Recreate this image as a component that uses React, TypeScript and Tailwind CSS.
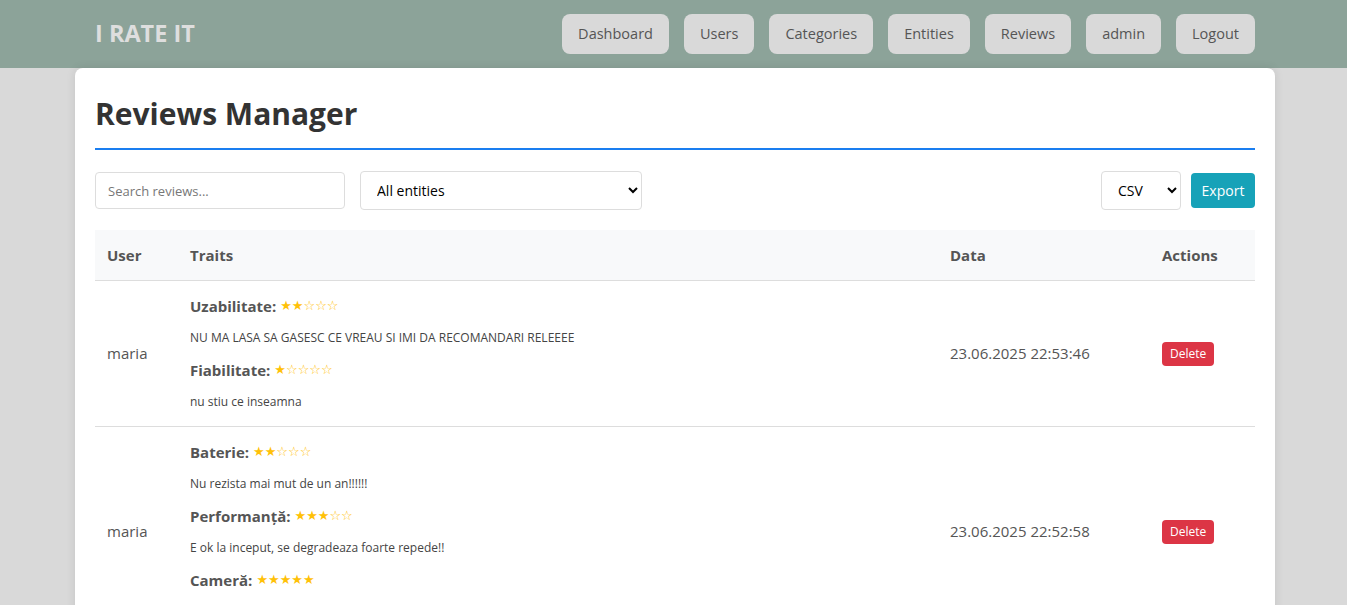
const font = { fontFamily: '"Open Sans", "Noto Sans", sans-serif' };

const navItems = ['Dashboard', 'Users', 'Categories', 'Entities', 'Reviews', 'admin', 'Logout'];

type Trait = { name: string; rating: number; comment: string };

const reviews: { user: string; date: string; traits: Trait[] }[] = [
    {
        user: 'maria',
        date: '23.06.2025 22:53:46',
        traits: [
            { name: 'Uzabilitate', rating: 2, comment: 'NU MA LASA SA GASESC CE VREAU SI IMI DA RECOMANDARI RELEEEE' },
            { name: 'Fiabilitate', rating: 1, comment: 'nu stiu ce inseamna' },
        ],
    },
    {
        user: 'maria',
        date: '23.06.2025 22:52:58',
        traits: [
            { name: 'Baterie', rating: 2, comment: 'Nu rezista mai mut de un an!!!!!!' },
            { name: 'Performanță', rating: 3, comment: 'E ok la inceput, se degradeaza foarte repede!!' },
            { name: 'Cameră', rating: 5, comment: '' },
        ],
    },
];

function Stars({ n }: { n: number }) {
    return (
        <span
            className="ml-1 text-[13px] leading-none text-[#ffc107]"
            style={{ fontFamily: '"DejaVu Sans", sans-serif' }}
        >
            {'★'.repeat(n)}
            {'☆'.repeat(5 - n)}
        </span>
    );
}

export default function App() {
    return (
        <div className="min-h-[605px] bg-[#d9d9d9] text-[#444]" style={font}>
            <nav className="h-[68px] bg-[#8ca399]">
                <div className="ml-[75px] flex h-full w-[1200px] items-center justify-between px-5 pb-[1px]">
                    <span className="text-[23.5px] font-bold text-[#dedede]">I RATE IT</span>
                    <div className="flex gap-[15px]">
                        {navItems.map((item) => (
                            <button
                                key={item}
                                className="h-10 rounded-lg bg-[#d9d9d9] px-4 text-[14.5px] text-[#555]"
                            >
                                {item}
                            </button>
                        ))}
                    </div>
                </div>
            </nav>

            <main className="ml-[75px] w-[1200px] rounded-lg bg-white px-5 pt-[26px] shadow-[0_0_10px_rgba(0,0,0,0.1)]">
                <h1 className="border-b-2 border-[#1a7ef0] pb-[14px] text-[30px] leading-10 font-bold text-[#333]">
                    Reviews Manager
                </h1>

                <div className="mt-[21px] flex items-center">
                    <input
                        placeholder="Search reviews..."
                        className="h-[37px] w-[250px] rounded border border-[#ddd] px-3 text-[13px] placeholder:text-[#777]"
                    />
                    <select className="ml-[15px] h-[39px] w-[282px] rounded border border-[#ddd] bg-white px-3 text-[14px] text-black">
                        <option>All entities</option>
                    </select>
                    <div className="ml-auto flex items-center gap-[10px]">
                        <select className="h-[39px] w-[80px] rounded border border-[#ddd] bg-white px-3 text-[14px] text-black">
                            <option>CSV</option>
                        </select>
                        <button className="h-[35px] w-[64px] rounded bg-[#17a2b8] text-[14px] text-white">
                            Export
                        </button>
                    </div>
                </div>

                <table className="mt-5 w-full border-collapse text-left">
                    <thead>
                        <tr className="h-[50px] border-b border-[#ddd] bg-[#f8f9fa] text-[15px] font-bold text-[#555]">
                            <th className="w-[83px] px-3">User</th>
                            <th className="w-[760px] px-3">Traits</th>
                            <th className="w-[212px] px-3">Data</th>
                            <th className="px-3">Actions</th>
                        </tr>
                    </thead>
                    <tbody>
                        {reviews.map((r, i) => (
                            <tr key={i} className="border-b border-[#ddd] text-[15px] text-[#555]">
                                <td className="px-3 align-middle">{r.user}</td>
                                <td className="px-3 pt-[13px] pb-[15px]">
                                    <div className="flex flex-col gap-[11px]">
                                        {r.traits.map((t) => (
                                            <div key={t.name} className="flex flex-col gap-[11px]">
                                                <div className="flex h-6 items-center">
                                                    <strong className="text-[15px] leading-6 text-[#555]">{t.name}:</strong>
                                                    <Stars n={t.rating} />
                                                </div>
                                                <p className="min-h-[18px] text-[12px] leading-[18px] text-[#444]">
                                                    {t.comment}
                                                </p>
                                            </div>
                                        ))}
                                    </div>
                                </td>
                                <td className="px-3 align-middle">{r.date}</td>
                                <td className="px-3 align-middle">
                                    <button className="h-6 rounded bg-[#dc3545] px-2 text-[12px] text-white">
                                        Delete
                                    </button>
                                </td>
                            </tr>
                        ))}
                    </tbody>
                </table>
            </main>
        </div>
    );
}
